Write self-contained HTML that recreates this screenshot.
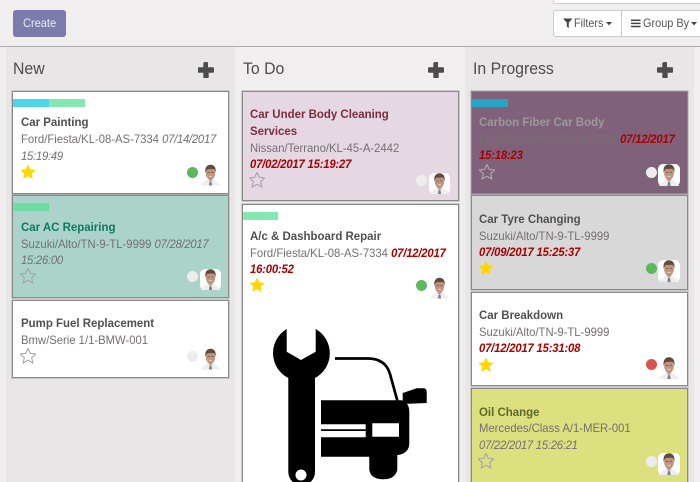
<!DOCTYPE html>
<html><head><meta charset="utf-8">
<style>
html,body{margin:0;padding:0;width:700px;height:482px;overflow:hidden;background:#f0eeee;font-family:"Liberation Sans",sans-serif}
#r{position:relative;width:700px;height:482px;overflow:hidden}
.a{position:absolute}
.card{position:absolute;box-sizing:border-box;width:217px;border:1px solid #8a8a8a;box-shadow:0 0 0 .5px #aaa;background:#fff}
.t{position:absolute;white-space:nowrap;font-size:12px;line-height:17px;color:#746f72;transform:scaleX(.94);transform-origin:0 0}
.b{font-weight:bold;color:#505050;transform:scaleX(.955)}
.i{font-style:italic;letter-spacing:-.27px}
.d{font-weight:bold;font-style:italic;color:#a80000;letter-spacing:-.2px}
.h{position:absolute;font-size:17px;line-height:20px;color:#4c4c4c;white-space:nowrap;transform:scaleX(.93);transform-origin:0 0}
.dot{position:absolute;width:11px;height:11px;border-radius:50%;background:#eeecec}
.g{background:#5cb85c}
.chip{position:absolute;height:8px;width:36px}
svg.s,svg.av{position:absolute}
</style></head><body><div id="r">
<svg width="0" height="0" style="position:absolute">
<symbol id="av" viewBox="0 0 22 22">
<path d="M1 22C2 18.500 6 17.500 8.500 15.500L13.500 15.500C16 17.500 20 18.500 21 22Z" fill="#eeeef1"/>
<path d="M9 13H13V16.500L11 18 9 16.500Z" fill="#c9a08c"/>
<ellipse cx="11" cy="8.800" rx="4.900" ry="7.200" fill="#bf947e"/>
<path d="M5.700 9C4.700 3 7.500 .3 11 .3S17.300 3 16.300 9C16 6.800 15.300 5 14 4.600 12 5.200 9 4.600 7.500 5.200 6.500 6 6 7.500 5.700 9Z" fill="#5f4a3c"/>
<path d="M7.800 8.300h2.400M11.800 8.300h2.400" stroke="#6a4c40" stroke-width=".9" opacity=".8"/>
<path d="M9.300 12.300h3.400" stroke="#f0e3dc" stroke-width=".8"/>
<path d="M10 18h2l.7 4h-3.400z" fill="#7a8490"/>
</symbol>
<symbol id="st" viewBox="0 0 16 16"><polygon points="8,.5 10.300,5.300 15.600,6 11.700,9.600 12.800,15 8,12.300 3.200,15 4.300,9.600 .4,6 5.700,5.300"/></symbol>
</svg>

<!-- header -->
<div class="a" style="left:0;top:46px;width:700px;height:1px;background:#aaa"></div>
<div class="a" style="left:13px;top:10px;width:53px;height:27px;background:#7c7bad;border-radius:3px"></div>
<div class="t" style="left:23px;top:15px;color:#eee;transform:scaleX(.92)">Create</div>
<div class="a" style="left:553px;top:-6px;width:160px;height:10px;background:#fff;border:1px solid #ccc;border-radius:3px;box-sizing:border-box"></div>
<div class="a" style="left:553px;top:10px;width:160px;height:27px;background:#fff;border:1px solid #ccc;border-radius:3px;box-sizing:border-box"></div>
<div class="a" style="left:621px;top:10px;width:1px;height:27px;background:#ccc"></div>
<svg class="a" style="left:563px;top:18px" width="10" height="10" viewBox="0 0 10 10"><path d="M0 .5H9.500L5.800 4.600V10L3.800 8.500V4.600Z" fill="#444"/></svg>
<div class="t" style="left:574px;top:15px;color:#555;transform:scaleX(.9)">Filters</div>
<svg class="a" style="left:606px;top:22px" width="6" height="4"><path d="M0 0H6L3 3.400Z" fill="#444"/></svg>
<svg class="a" style="left:631px;top:19px" width="10" height="9"><path d="M0 .5H9.500V2H0ZM0 3.600H9.500V5.100H0ZM0 6.700H9.500V8.200H0Z" fill="#444"/></svg>
<div class="t" style="left:643px;top:15px;color:#555;transform:scaleX(.91)">Group By</div>
<svg class="a" style="left:691px;top:22px" width="6" height="4"><path d="M0 0H6L3 3.400Z" fill="#444"/></svg>

<!-- columns -->
<div class="a" style="left:6px;top:47px;width:229px;height:435px;background:#e8e6e6"></div>
<div class="a" style="left:465px;top:47px;width:229px;height:435px;background:#e8e6e6"></div>

<div class="h" style="left:13px;top:59px">New</div>
<div class="h" style="left:243px;top:59px">To Do</div>
<div class="h" style="left:472.500px;top:59px">In Progress</div>
<svg class="a" style="left:198px;top:62px" width="16" height="16"><path d="M6 .8Q6 0 6.800 0H9.200Q10 0 10 .8V5.300H15.200Q16 5.300 16 6.100V9.900Q16 10.700 15.200 10.700H10.700V15.200Q10.700 16 9.900 16H6.100Q5.300 16 5.300 15.200V10.700H.8Q0 10.700 0 9.900V6.100Q0 5.300 .8 5.300H5.300V.8Z" fill="#4c4c4c"/></svg>
<svg class="a" style="left:428px;top:62px" width="16" height="16"><path d="M6 .8Q6 0 6.800 0H9.200Q10 0 10 .8V5.300H15.200Q16 5.300 16 6.100V9.900Q16 10.700 15.200 10.700H10.700V15.200Q10.700 16 9.900 16H6.100Q5.300 16 5.300 15.200V10.700H.8Q0 10.700 0 9.900V6.100Q0 5.300 .8 5.300H5.300V.8Z" fill="#4c4c4c"/></svg>
<svg class="a" style="left:657px;top:62px" width="16" height="16"><path d="M6 .8Q6 0 6.800 0H9.200Q10 0 10 .8V5.300H15.200Q16 5.300 16 6.100V9.900Q16 10.700 15.200 10.700H10.700V15.200Q10.700 16 9.900 16H6.100Q5.300 16 5.300 15.200V10.700H.8Q0 10.700 0 9.900V6.100Q0 5.300 .8 5.300H5.300V.8Z" fill="#4c4c4c"/></svg>

<!-- cards: col 1 -->
<div class="card" style="left:12px;top:91px;height:103px"></div>
<div class="chip" style="left:13px;top:99px;background:#4dd5ea"></div>
<div class="chip" style="left:49px;top:99px;background:#84e8b4"></div>
<div class="t b" style="left:21px;top:114px">Car Painting</div>
<div class="t" style="left:21px;top:131px">Ford/Fiesta/KL-08-AS-7334 <span class="i">07/14/2017</span></div>
<div class="t i" style="left:21px;top:148px">15:19:49</div>
<svg class="s" style="left:20px;top:164px" width="16" height="16" fill="#ffd700"><use href="#st"/></svg>
<div class="dot g" style="left:187px;top:167px"></div>
<svg class="av" style="left:200px;top:164px" width="21" height="22"><use href="#av"/></svg>

<div class="card" style="left:12px;top:195px;height:103px;background:#abd3c9"></div>
<div class="chip" style="left:13px;top:203px;background:#6edba3"></div>
<div class="t b" style="left:21px;top:219px;color:#0f7a5e">Car AC Repairing</div>
<div class="t" style="left:21px;top:236px">Suzuki/Alto/TN-9-TL-9999 <span class="i">07/28/2017</span></div>
<div class="t i" style="left:21px;top:252px">15:26:00</div>
<svg class="s" style="left:20px;top:268px" width="16" height="16" fill="none" stroke="#a5a5ac" stroke-width="1.1"><use href="#st"/></svg>
<div class="dot" style="left:187px;top:271px"></div>
<div class="a" style="left:200px;top:269px;width:21px;height:21px;background:#fff;border-radius:5px"></div>
<svg class="av" style="left:200px;top:269px" width="21" height="21"><use href="#av"/></svg>

<div class="card" style="left:12px;top:300px;height:78px"></div>
<div class="t b" style="left:21px;top:315px">Pump Fuel Replacement</div>
<div class="t" style="left:21px;top:332px">Bmw/Serie 1/1-BMW-001</div>
<svg class="s" style="left:20px;top:348px" width="16" height="16" fill="none" stroke="#a5a5ac" stroke-width="1.1"><use href="#st"/></svg>
<div class="dot" style="left:187px;top:351px"></div>
<svg class="av" style="left:200px;top:348px" width="21" height="22"><use href="#av"/></svg>

<!-- cards: col 2 -->
<div class="card" style="left:242px;top:91px;height:110px;background:#e5d8e3"></div>
<div class="t b" style="left:250px;top:106px;color:#7c2c3d">Car Under Body Cleaning</div>
<div class="t b" style="left:250px;top:123px;color:#7c2c3d">Services</div>
<div class="t" style="left:250px;top:140px">Nissan/Terrano/KL-45-A-2442</div>
<div class="t d" style="left:250px;top:156px">07/02/2017 15:19:27</div>
<svg class="s" style="left:249px;top:172px" width="16" height="16" fill="none" stroke="#a5a5ac" stroke-width="1.1"><use href="#st"/></svg>
<div class="dot" style="left:416px;top:175px"></div>
<div class="a" style="left:429px;top:173px;width:21px;height:21px;background:#fff;border-radius:5px"></div>
<svg class="av" style="left:429px;top:173px" width="21" height="21"><use href="#av"/></svg>

<div class="card" style="left:242px;top:204px;height:290px"></div>
<div class="chip" style="left:243px;top:212px;width:35px;background:#84e8b4"></div>
<div class="t b" style="left:250px;top:228px">A/c &amp; Dashboard Repair</div>
<div class="t" style="left:250px;top:245px">Ford/Fiesta/KL-08-AS-7334 <span class="d">07/12/2017</span></div>
<div class="t d" style="left:250px;top:261px">16:00:52</div>
<svg class="s" style="left:249px;top:277px" width="16" height="16" fill="#ffd700"><use href="#st"/></svg>
<div class="dot g" style="left:416px;top:279.500px"></div>
<svg class="av" style="left:429px;top:277px" width="21" height="22"><use href="#av"/></svg>

<!-- wrench + car -->
<svg class="a" style="left:0;top:0" width="700" height="482" viewBox="0 0 700 482">
<path fill-rule="evenodd" d="M286.700 329A28 28 0 0 0 288.300 378V472A12.700 12.700 0 0 0 315 472V378A28 28 0 0 0 315.700 329V351.700L301 360 286.700 351.700ZM301 469.500a5.500 5.500 0 1 1 0 11a5.500 5.500 0 1 1 0-11Z" fill="#000"/>
<path d="M335 358.500H368C380 358.500 387 364 390 374L398 403" fill="none" stroke="#000" stroke-width="2.700"/>
<path d="M402.700 393L416.700 388.300 424 388.300Q426.700 388.800 426.700 392V403L402.700 404Z" fill="#000"/>
<path fill-rule="evenodd" d="M321 400.300H401.700Q409.300 403 409.300 411.700V443.300Q409.300 453 398.300 455H397.300V470Q395 479.300 383.300 479.300 371 479.300 369.300 470V456.700H321V437.300H365.700V431H321V429.300H365.700V424.300H321ZM372.300 423.300V436.700H399V423.300Z" fill="#000"/>
</svg>

<!-- cards: col 3 -->
<div class="card" style="left:471px;top:91px;height:103px;background:#7f627a"></div>
<div class="chip" style="left:472px;top:99px;background:#25a5c5"></div>
<div class="t b" style="left:479px;top:114px;color:#9a9a9a">Carbon Fiber Car Body</div>
<div class="t" style="left:479px;top:131px;color:#77716f">Ford/Fiesta/KL-08-AS-7334 <span class="d">07/12/2017</span></div>
<div class="t d" style="left:479px;top:147px">15:18:23</div>
<svg class="s" style="left:478.500px;top:164px" width="16" height="16" fill="none" stroke="#b0a9b0" stroke-width="1.1"><use href="#st"/></svg>
<div class="dot" style="left:646px;top:167px"></div>
<div class="a" style="left:658px;top:164px;width:22px;height:22px;background:#fff;border-radius:5px"></div>
<svg class="av" style="left:658px;top:164px" width="22" height="22"><use href="#av"/></svg>

<div class="card" style="left:471px;top:195px;height:95px;background:#d8d8d8"></div>
<div class="t b" style="left:479px;top:211px">Car Tyre Changing</div>
<div class="t" style="left:479px;top:228px">Suzuki/Alto/TN-9-TL-9999</div>
<div class="t d" style="left:479px;top:244px">07/09/2017 15:25:37</div>
<svg class="s" style="left:478px;top:260px" width="16" height="16" fill="#ffd700"><use href="#st"/></svg>
<div class="dot g" style="left:646px;top:263px"></div>
<div class="a" style="left:658px;top:260px;width:22px;height:22px;background:#fff;border-radius:5px"></div>
<svg class="av" style="left:658px;top:260px" width="22" height="22"><use href="#av"/></svg>

<div class="card" style="left:471px;top:292px;height:94px"></div>
<div class="t b" style="left:479px;top:307px">Car Breakdown</div>
<div class="t" style="left:479px;top:324px">Suzuki/Alto/TN-9-TL-9999</div>
<div class="t d" style="left:479px;top:340px">07/12/2017 15:31:08</div>
<svg class="s" style="left:478px;top:357px" width="16" height="16" fill="#ffd700"><use href="#st"/></svg>
<div class="dot" style="left:646px;top:359px;background:#d9534f"></div>
<svg class="av" style="left:658px;top:357px" width="22" height="22"><use href="#av"/></svg>

<div class="card" style="left:471px;top:388px;height:110px;background:#dde07f"></div>
<div class="t b" style="left:479px;top:404px;color:#5b6b2a">Oil Change</div>
<div class="t" style="left:479px;top:420px">Mercedes/Class A/1-MER-001</div>
<div class="t i" style="left:479px;top:437px">07/22/2017 15:26:21</div>
<svg class="s" style="left:478px;top:453px" width="16" height="16" fill="none" stroke="#a5a5ac" stroke-width="1.1"><use href="#st"/></svg>
<div class="dot" style="left:646px;top:456px"></div>
<div class="a" style="left:658px;top:453px;width:22px;height:22px;background:#fff;border-radius:5px"></div>
<svg class="av" style="left:658px;top:453px" width="22" height="22"><use href="#av"/></svg>
</div></body></html>
